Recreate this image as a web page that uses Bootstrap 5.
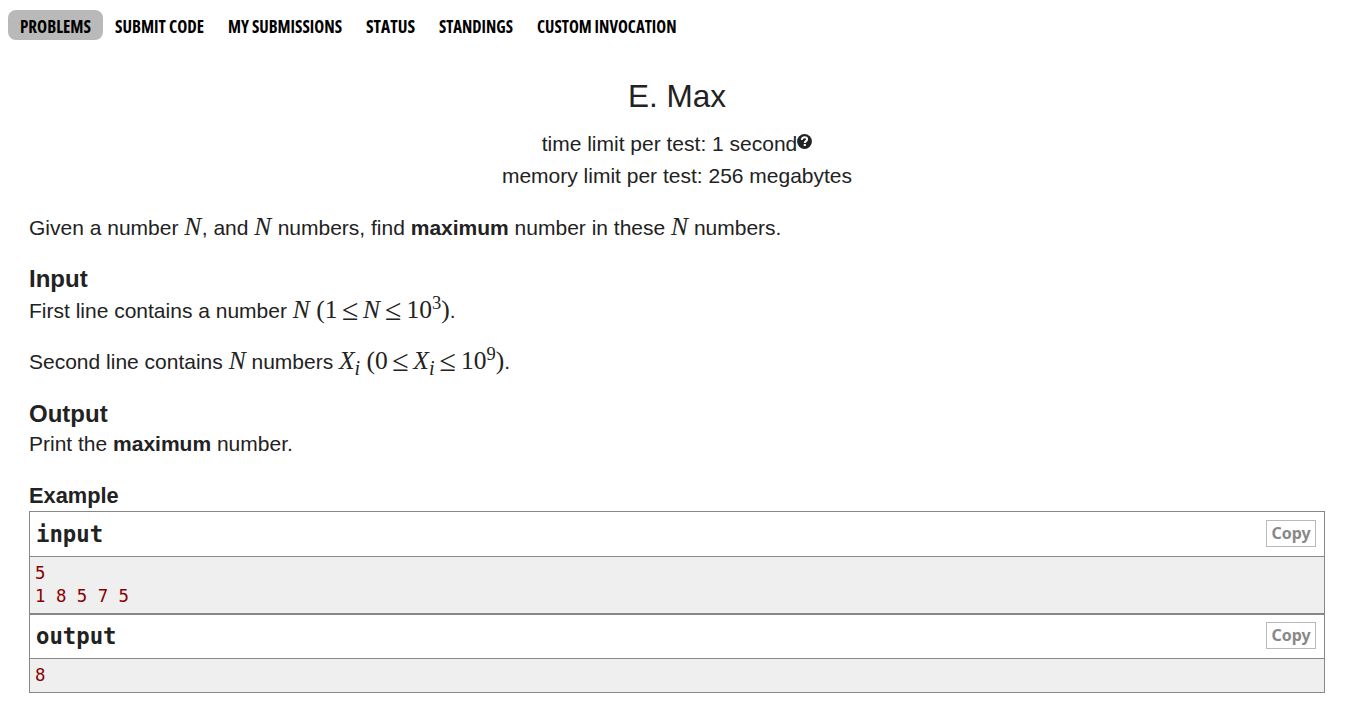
<!DOCTYPE html>
<html lang="en">
<head>
<meta charset="utf-8">
<meta name="viewport" content="width=device-width, initial-scale=1">
<title>E. Max</title>
<link href="https://cdn.jsdelivr.net/npm/bootstrap@5.3.0/dist/css/bootstrap.min.css" rel="stylesheet">
<style>
body{font-family:"Liberation Sans",Arial,sans-serif;font-size:21px;line-height:32px;color:#222;background:#fff}
.menu{padding:10px 0 0 8px;height:76px}
.menu .nav-link{padding:0 12px;height:30px;color:#000;border-radius:8px}
.menu .nav-link.active{background:#b9b9b9}
.menu svg{display:block;height:30px;font:bold 18px "Open Sans",sans-serif;font-stretch:75%;overflow:visible}
.problem{padding:0 24px 0 29px}
.problem-name{font-size:31.5px;line-height:40px;margin-bottom:12px;font-weight:400}
.help-icon{width:15px;height:15px;display:inline-block;vertical-align:2px}
.statement{margin-top:20px}
.statement p{margin:0 0 19px}
.sect{font-size:24px;line-height:32px;font-weight:700;margin:0}
.math{font-family:"Liberation Serif","Times New Roman",serif;font-size:25.5px;line-height:1px;white-space:nowrap}
.math.var{margin-right:.5px}
.math sub,.math sup{font-size:18.5px;line-height:0;vertical-align:baseline}
.math sub{bottom:-6px;font-size:20px}
.math sup{top:-9px}
.rel{display:inline-block;text-align:center;width:25.5px;font-size:30px;position:relative;top:2px}
.rel.tight{width:26.500px}
.sample{border:1px solid #888}
.sample-head{height:44px;padding:0 8px 0 6px;border-bottom:1px solid #888;font:bold 22.3px/44px "DejaVu Sans Mono",monospace}
.sample pre{margin:0;padding:5px 5px 6px;background:#efefef;color:#880000;font:17.35px/22.75px "DejaVu Sans Mono",monospace}
.sample.first .sample-head{height:45px}
.sample.first pre{padding-bottom:5px}
.copy{font:bold 16px/25px "Noto Sans","Open Sans",sans-serif;color:#888;border:1px solid #b9b9b9;border-radius:0;padding:0;width:50px;height:27px;margin-top:-1px}
</style>
</head>
<body>
<nav class="menu">
<ul class="nav flex-nowrap">
<li class="nav-item"><a class="nav-link active" href="#"><svg width="71"><text x="0" y="23" textLength="71" lengthAdjust="spacingAndGlyphs">PROBLEMS</text></svg></a></li>
<li class="nav-item"><a class="nav-link" href="#"><svg width="89"><text x="0" y="23" textLength="89" lengthAdjust="spacingAndGlyphs">SUBMIT CODE</text></svg></a></li>
<li class="nav-item"><a class="nav-link" href="#"><svg width="114"><text x="0" y="23" textLength="114" lengthAdjust="spacingAndGlyphs">MY SUBMISSIONS</text></svg></a></li>
<li class="nav-item"><a class="nav-link" href="#"><svg width="49"><text x="0" y="23" textLength="49" lengthAdjust="spacingAndGlyphs">STATUS</text></svg></a></li>
<li class="nav-item"><a class="nav-link" href="#"><svg width="74"><text x="0" y="23" textLength="74" lengthAdjust="spacingAndGlyphs">STANDINGS</text></svg></a></li>
<li class="nav-item"><a class="nav-link" href="#"><svg width="140"><text x="0" y="23" textLength="139.5" lengthAdjust="spacingAndGlyphs">CUSTOM INVOCATION</text></svg></a></li>
</ul>
</nav>
<main class="problem">
<header class="text-center">
<h1 class="problem-name">E. Max</h1>
<div>time limit per test: 1 second<svg class="help-icon" viewBox="0 0 15 15"><circle cx="7.5" cy="7.5" r="7.4" fill="#222"/><path d="M4.800 6.100C4.800 4.200 6 3.300 7.600 3.300c1.500 0 2.500.8 2.500 2 0 1.900-2.300 1.700-2.300 3.600" fill="none" stroke="#fff" stroke-width="2"/><path d="M6.700 10h2.200v2H6.700z" fill="#fff"/></svg></div>
<div>memory limit per test: 256 megabytes</div>
</header>
<section class="statement">
<p>Given a number <span class="math var"><i>N</i></span>, and <span class="math var"><i>N</i></span> numbers, find <b>maximum</b> number in these <span class="math"><i>N</i></span> numbers.</p>
<h2 class="sect">Input</h2>
<p>First line contains a number <span class="math"><i>N</i> (1<span class="rel">≤</span><i>N</i><span class="rel tight">≤</span>10<sup>3</sup>)</span>.</p>
<p style="margin-bottom:21px">Second line contains <span class="math"><i>N</i></span> numbers <span class="math"><i>X<sub>i</sub></i> (0<span class="rel">≤</span><i>X<sub>i</sub></i><span class="rel tight">≤</span>10<sup>9</sup>)</span>.</p>
<h2 class="sect" style="line-height:30px">Output</h2>
<p style="line-height:30px;margin-bottom:22px">Print the <b>maximum</b> number.</p>
</section>
<section>
<h2 class="sect" style="font-size:21.8px;line-height:30px">Example</h2>
<div class="sample first">
<div class="sample-head d-flex justify-content-between align-items-center"><span>input</span><button class="btn copy">Copy</button></div>
<pre>5
1 8 5 7 5</pre>
</div>
<div class="sample">
<div class="sample-head d-flex justify-content-between align-items-center"><span>output</span><button class="btn copy">Copy</button></div>
<pre>8</pre>
</div>
</section>
</main>
<script src="https://cdn.jsdelivr.net/npm/bootstrap@5.3.0/dist/js/bootstrap.bundle.min.js"></script>
</body>
</html>
